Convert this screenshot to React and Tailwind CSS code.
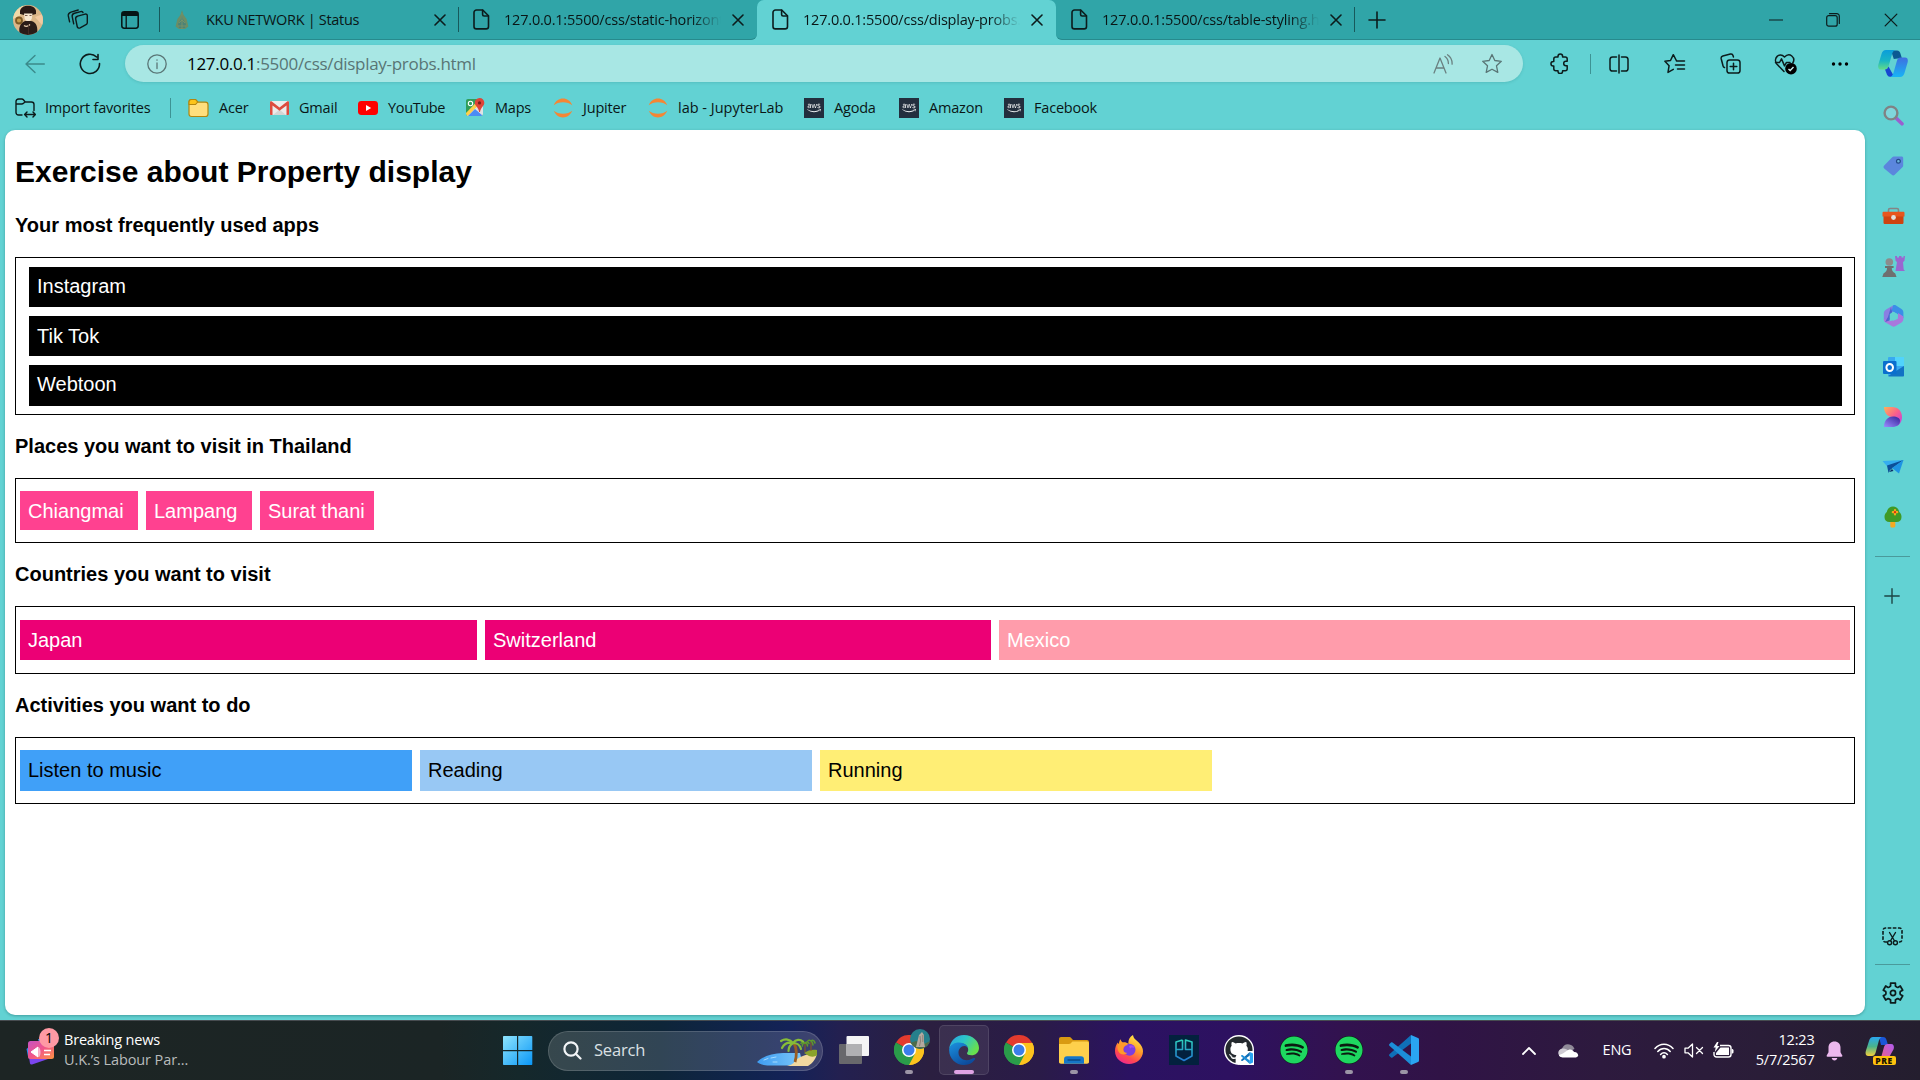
import React from "react";
import { FaSpotify, FaGithub, FaAws } from "react-icons/fa";

/* ---------- small helpers ---------- */

function Svg({ w = 20, h = w, box = `0 0 ${w} ${h}`, children, className = "" }) {
  return (
    <svg width={w} height={h} viewBox={box} fill="none" className={`block shrink-0 ${className}`}>
      {children}
    </svg>
  );
}

function Line({ w, h, box, children, color = "#0c1c1c", sw = 1.4, className }) {
  return (
    <Svg w={w} h={h} box={box} className={className}>
      <g stroke={color} strokeWidth={sw} strokeLinecap="round" strokeLinejoin="round">
        {children}
      </g>
    </Svg>
  );
}

/* ---------- browser chrome icons ---------- */

const Avatar = () => (
  <Svg w={30} box="0 0 30 30">
    <clipPath id="av"><circle cx="15" cy="15" r="15" /></clipPath>
    <g clipPath="url(#av)">
      <rect width="30" height="30" fill="#dcb688" />
      <path d="M0 0h10v9L0 14z" fill="#f0d9a8" />
      <path d="M22 12l8-3v12z" fill="#f3c9a0" />
      <path d="M7 6c1-7 15-7 16 0v3l-4 1H11L7 9z" fill="#2b1a15" />
      <path d="M11 8.500h8.500l-.8 5.500c-2 3-5 3-7 0z" fill="#f8e8d2" />
      <path d="M12 10.500h2.500M16.500 10.500h2" stroke="#6a4a3c" strokeWidth=".9" />
      <path d="M7 30c-2-7 0-12 5-14h6c6 1 7 7 6 14z" fill="#2a1c18" />
      <path d="M11 20.500c2 1.500 4 1 6-1" stroke="#e9cfb0" strokeWidth="1.200" />
      <circle cx="6" cy="15.500" r="3" stroke="#7d5a25" strokeWidth="1.800" fill="#c89b4c" />
      <path d="M15.500 19v11" stroke="#4a3128" strokeWidth=".8" />
    </g>
  </Svg>
);

const Workspaces = () => (
  <Line w={22} h={21} sw={1.4}>
    <path d="M10.600 7.200l7.500-2.100c1.300-.3 2.200.4 2.200 1.600v7.100c0 .9-.5 1.500-1.300 1.900l-5.900 3.100c-1.500.7-2.600.1-2.900-1.300l-1.500-7.300c-.3-1.500.4-2.600 1.900-3z" />
    <path d="M16 3.500c-.3-1-1.200-1.200-2.300-.9L7.500 4.300c-1.800.5-2.600 1.600-2.300 3.300l1.500 7.300" />
    <path d="M11.200 1L4 3.100C2 3.700 1 5 1.300 6.900l1.300 6" />
  </Line>
);

const TabActions = () => (
  <Svg w={18} h={18}>
    <rect x=".8" y=".8" width="16.400" height="16.400" rx="2.400" stroke="#061414" strokeWidth="1.500" />
    <path d="M1 2.500A1.800 1.800 0 012.800 1h12.400A1.800 1.800 0 0117 2.500V5H1z" fill="#061414" />
    <path d="M5.200 5v12" stroke="#061414" strokeWidth="1.300" />
  </Svg>
);

const KkuIcon = () => (
  <Svg w={14} h={20}>
    <path d="M7 0l1.600 5 3 4 1.800 7.500L10 19H4L.6 16.500 2.400 9l3-4z" fill="#6c8d65" />
    <path d="M7 4l1 5 3 5-1 4H4l-1-4 3-5z" fill="#4d8276" />
    <path d="M7 3v16M4 13l3-3 3 3M3 16h8" stroke="#7f9568" strokeWidth=".8" />
  </Svg>
);

const PageIcon = () => (
  <Line w={17} h={21} sw={1.6}>
    <path d="M3.500 1h6.200l5.800 5.800v10.700a2.400 2.400 0 01-2.400 2.400H3.400A2.400 2.400 0 011 17.500v-14A2.500 2.500 0 013.500 1z" />
    <path d="M9.600 1.200v4.300c0 1 .5 1.500 1.500 1.500h4.200" />
  </Line>
);

const CloseX = ({ s = 11, sw = 1.5 }) => (
  <Line w={s} box="0 0 12 12" sw={sw}><path d="M1 1l10 10M11 1L1 11" /></Line>
);

const Puzzle = () => (
  <Line w={20} h={21} sw={1.5}>
    <path d="M8 4V3.200a2.300 2.300 0 014.600 0V4h2.600c1.300 0 2 .7 2 2v2.300h-1.300a2.200 2.200 0 000 4.400h1.300v3c0 1.300-.7 2-2 2h-2.600v.6a2.300 2.300 0 01-4.600 0v-.6H5.800c-1.300 0-2-.7-2-2v-2.800H3.200a2.200 2.200 0 010-4.500h.6V6c0-1.300.7-2 2-2z" />
  </Line>
);

const STAR = "M11 1.500l2.800 6 6.500.8-4.800 4.500 1.300 6.600L11 16.200l-5.800 3.200 1.300-6.600L1.700 8.300l6.500-.8z";

const ReadAloud = () => (
  <Line w={21} h={20} color="#6a8080" sw={1.3}>
    <path d="M1 19L7 4l6 15M3.200 14h7.800" />
    <path d="M12 2.500c2.300 1.700 3.400 3.900 3.400 7M14.500.8c3.200 2.200 4.800 5.300 4.600 9.400" />
  </Line>
);

const SplitScreen = () => (
  <Line w={20} h={20} sw={1.5}>
    <path d="M7.500 3H3.600C2 3 1 4 1 5.600v8.800C1 16 2 17 3.600 17h3.900M12.500 3h3.900C18 3 19 4 19 5.600v8.800c0 1.600-1 2.600-2.600 2.600h-3.900M10 1v18" />
  </Line>
);

const FavStar = () => (
  <Line w={22} h={21} sw={1.5}>
    <path d="M12.600 8L9.300 1.700 6.500 7.500.9 8.300l4.200 4.400-1.100 6.700 5.300-3M11.500 12h9M12.500 8h8M13.500 16h7" />
  </Line>
);

const Collections = () => (
  <Line w={21} h={21} sw={1.5}>
    <rect x="7" y="7" width="13" height="13" rx="2.600" />
    <path d="M13.500 10.200v6.600M10.200 13.500h6.600M4.500 14.500c-.9-.3-1.300-.8-1.500-1.700L1.200 5.700c-.3-1.400.3-2.300 1.600-2.700l7.600-1.900c1.400-.3 2.300.2 2.700 1.600l.3 1.200" />
  </Line>
);

const HeartCheck = () => (
  <Svg w={24} h={22}>
    <g stroke="#0c1c1c" strokeWidth="1.500" strokeLinejoin="round" strokeLinecap="round">
      <path d="M10 18.500L2.800 11C-1.300 5.600 5.300-1.600 10.500 4c5.200-5.600 11.500.8 8.300 6" />
      <path d="M1.500 9.500h4l2-3.600 3 7 2-3.500h3.500" />
    </g>
    <circle cx="17" cy="15.700" r="5.800" fill="#000" />
    <path d="M14.500 15.900l1.700 1.700 3.300-3.500" stroke="#c9efee" strokeWidth="1.400" />
  </Svg>
);

const Copilot = ({ w = 30, h = 27 }) => (
  <Svg w={w} h={h} box="0 0 30 27">
    <defs>
      <linearGradient id="cp1" x1="0" y1="0" x2="0" y2="1"><stop offset="0" stopColor="#0b9ddb" /><stop offset=".55" stopColor="#19b5c4" /><stop offset="1" stopColor="#62dc88" /></linearGradient>
      <linearGradient id="cp2" x1="0" y1="0" x2="0" y2="1"><stop offset="0" stopColor="#3f6fe0" /><stop offset="1" stopColor="#18b4f5" /></linearGradient>
    </defs>
    <path d="M13 .5h6c2 0 3 1.500 3.600 3.500l1.200 4-8 1z" fill="#0b5a93" />
    <path d="M8 0h9c-2 1-2.800 3-3.500 6l-3 10.500c-.7 2-1.800 3-3.500 3H3C.5 19.500-.3 17.500.4 14.500L3.500 4C4.300 1.200 5.600 0 8 0z" fill="url(#cp1)" />
    <path d="M7 19.500c1.700 0 2.800-1 3.500-3l5 9C15 27 13.500 27 12 26.800c-2.200-.2-3-1.800-3.600-3.800z" fill="#1746d1" />
    <path d="M22 27h-9.500c2-1 2.700-3 3.500-6l3-10.500c.6-2 1.800-3 3.500-3H27c2.500 0 3.300 2 2.600 5L26.500 23c-.8 2.800-2.100 4-4.500 4z" fill="url(#cp2)" />
  </Svg>
);

/* ---------- bookmarks ---------- */

const ImportFav = () => (
  <Line w={21} h={20} sw={1.4}>
    <path d="M7 17H3.600C2 17 1 16 1 14.400V3.600C1 2 2 1 3.600 1h3.200c.7 0 1.200.2 1.600.7L10.200 4h6.200C18 4 19 5 19 6.600v6M1.200 6h5.500c.8 0 1.300-.2 1.800-.7L10 4M10 16.500h10M12 14l-2.400 2.500L12 19M18 14l2.400 2.500L18 19" />
  </Line>
);
const Folder = () => (
  <Svg w={21} h={20}>
    <path d="M1 4c0-1.600.9-2.500 2.500-2.500h4L10 4.200h7.500c1.500 0 2.500 1 2.500 2.500V16c0 1.600-1 2.500-2.500 2.500h-14C1.900 18.500 1 17.600 1 16z" fill="#ffdf7d" stroke="#b3860d" strokeWidth="1.200" />
    <path d="M1 6.500V4c0-1.600.9-2.500 2.500-2.500h4L9.700 4 7.500 6.500z" fill="#fcc419" stroke="#b3860d" strokeWidth="1.100" />
  </Svg>
);
const Gmail = () => (
  <Svg w={19} h={14}>
    <rect width="19" height="14" rx="1.500" fill="#ececec" />
    <path d="M3 14l6.500-5.500L16 14z" fill="#d5d5d5" />
    <path d="M0 1.500C0 .5 1 0 1.800.5L9.500 6.500 17.200.5c.8-.5 1.800 0 1.800 1V13c0 .6-.4 1-1 1h-1.500V4.500l-7 5.300-7-5.300V14H1c-.6 0-1-.4-1-1z" fill="#dd4b3e" />
  </Svg>
);
const YouTube = () => (
  <Svg w={20} h={14}><rect width="20" height="14" rx="3.400" fill="#f00" /><path d="M8 4l5.200 3L8 10z" fill="#fff" /></Svg>
);
const Maps = () => (
  <Svg w={19} h={19}>
    <clipPath id="mp"><rect y="1" width="17" height="17" rx="2" /></clipPath>
    <g clipPath="url(#mp)">
      <rect y="1" width="17" height="17" fill="#2f9e58" />
      <path d="M0 18L14 4h5v14z" fill="#dfe3e6" />
      <path d="M-1 16L12 2.500l2.500 2.500L2 18z" fill="#fdd04a" />
      <path d="M9 11l8 7H2z" fill="#4b8cf5" />
      <circle cx="4.500" cy="5.500" r="2.200" stroke="#fff" strokeWidth="1.100" />
    </g>
    <path d="M13.500 0A4.800 4.800 0 0118.300 5c0 3-3.400 4-4.300 9h-.8C12.500 9 8.800 8 8.800 5A4.800 4.800 0 0113.500 0z" fill="#df4437" />
    <circle cx="13.500" cy="4.900" r="1.600" fill="#7b1f19" />
  </Svg>
);
const Jupyter = () => (
  <Svg w={20} h={20}>
    <path d="M.8 7.200C2.600 2.900 6 .6 10 .6s7.400 2.300 9.200 6.600C16.800 5.300 13.700 4.200 10 4.200S3.200 5.300.8 7.200zM.8 12.800c1.800 4.300 5.200 6.600 9.200 6.600s7.400-2.300 9.200-6.600c-2.400 1.900-5.500 3-9.200 3s-6.800-1.100-9.200-3z" fill="#f58634" />
  </Svg>
);
const Aws = () => (
  <div className="grid size-5 shrink-0 place-items-center bg-[#232f3e]"><FaAws size={14} color="#f1f3f4" /></div>
);

const BOOKMARKS = [
  { icon: <Folder />, label: "Acer", w: "w-[82px]" },
  { icon: <Gmail />, label: "Gmail", w: "w-[88px]" },
  { icon: <YouTube />, label: "YouTube", w: "w-[108px] tracking-[-0.35px]" },
  { icon: <Maps />, label: "Maps", w: "w-[87px]" },
  { icon: <Jupyter />, label: "Jupiter", w: "w-[95px]" },
  { icon: <Jupyter />, label: "lab - JupyterLab", w: "w-[156px] tracking-[0px]" },
  { icon: <Aws />, label: "Agoda", w: "w-[95px]" },
  { icon: <Aws />, label: "Amazon", w: "w-[105px]" },
  { icon: <Aws />, label: "Facebook", w: "w-[105px]" },
];

/* ---------- sidebar ---------- */

const SIDEBAR = [
  <Svg w={21} h={21}>
    <path d="M13 13l6 5.800" stroke="#9a5fd0" strokeWidth="3.600" strokeLinecap="round" />
    <circle cx="8" cy="8" r="6.400" stroke="#808284" strokeWidth="2.400" fill="#7fd6dc" />
  </Svg>,
  <Svg w={21} h={20}>
    <path d="M9 1.500C9.600.9 10.300.5 11 .5h7.500c1 0 1.700.7 1.700 1.700v7.300c0 .7-.3 1.300-.8 1.800l-7.700 7.500c-.9.9-2 .9-2.900 0L1.200 12.400c-.9-.9-.9-2 0-2.900z" fill="#5b86dd" />
    <circle cx="15.400" cy="5.300" r="1.900" fill="#6bb4dc" stroke="#234a8a" strokeWidth="1.200" />
  </Svg>,
  <Svg w={23} h={18}>
    <path d="M6.500 5V3c0-1 .6-1.500 1.500-1.500h7c.9 0 1.500.5 1.500 1.500v2" stroke="#858585" strokeWidth="1.600" />
    <path d="M1.500 9h20v6.500c0 1-.6 1.600-1.600 1.600H3.100c-1 0-1.600-.6-1.600-1.600z" fill="#cf4310" />
    <path d="M.5 6c0-.8.500-1.300 1.300-1.300h19.400c.8 0 1.300.5 1.300 1.300v3.600H.5z" fill="#e8561d" />
    <circle cx="11.500" cy="10.500" r="2.400" fill="#e4e0dd" />
  </Svg>,
  <Svg w={23} h={23}>
    <path d="M13 1h2v1.500h2V1h2.500v1.500h2V1H23l-.6 5-1.400 1 .7 7.500 1.300 1.500H13.500l1.500-9-1.400-1z" fill="#9a67d0" />
    <circle cx="7.300" cy="7" r="3.800" fill="#8c8c8c" />
    <path d="M3 11h8.600v2H9.800c0 2.400.8 3.800 3.500 5.500l1.200 3.500H.3l1.200-3.500c2.700-1.700 3.500-3.100 3.500-5.500H3z" fill="#6f6f6f" />
  </Svg>,
  <Svg w={21} h={22}>
    <path d="M10 .5L3.500 4.200C1.500 5.400.8 6.700.8 8.700v5.500l4 3.500 2-9L13 5z" fill="#8a7fe2" />
    <path d="M10 .5c1-.6 2.200-.4 3 0l5.500 3.400c1.200.8 1.900 2 1.900 3.600v5.700L15 9.500 8 5.500 7 12z" fill="#3a8ee8" />
    <path d="M20.400 11.500v2c0 2-.8 3.400-2.200 4.200l-6 3.600c-1 .5-2 .5-3 0l-7-4c-1-.7-1.400-2-1.400-3.300l6.700 2.100L14.700 14l.5-6z" fill="#a878dd" />
    <path d="M8 2l1 5-2.500 8.500L2 17l3-5z" fill="#3f56cc" opacity=".75" />
    <path d="M10.500 6.800l3.900 2.300v4.300l-3.900 2.300-3.700-2.300V9.100z" fill="#62d2d3" />
  </Svg>,
  <Svg w={21} h={20}>
    <rect x="5" y="0" width="16" height="19" rx="1" fill="#38a9f0" />
    <path d="M12 0h9v9h-9z" fill="#51d3fb" />
    <path d="M5 19L21 9v9.500c0 .5-.4 1-1 1H6z" fill="#1272c4" />
    <rect x="0" y="4" width="13.500" height="13" rx="1" fill="#0a6fce" />
    <ellipse cx="6.700" cy="10.500" rx="3.300" ry="3.500" stroke="#fff" strokeWidth="2" />
  </Svg>,
  <Svg w={20} h={22}>
    <defs>
      <linearGradient id="ds1" x1="0" y1="0" x2="1" y2="1"><stop offset="0" stopColor="#ffb257" /><stop offset=".5" stopColor="#fb5f8b" /><stop offset="1" stopColor="#b43bf0" /></linearGradient>
      <linearGradient id="ds2" x1="0" y1="1" x2="1" y2="0"><stop offset="0" stopColor="#9a8cff" /><stop offset="1" stopColor="#35219a" /></linearGradient>
    </defs>
    <path d="M1 1h8c6 0 10 4 10 10 0 5-3 8-5 9l1-8-6-1C5 11 1 7 1 1z" fill="url(#ds1)" />
    <path d="M1 21c0-6 3.500-10.500 9-10.500 4 0 7 1.500 7 4.500 0 3.500-3 6-8 6z" fill="url(#ds2)" />
  </Svg>,
  <Svg w={22} h={16}>
    <path d="M.5 2L21.500 1 7 9.500z" fill="#35aef0" />
    <path d="M5 6.500L21.500 1 8 11l-1.500 3z" fill="#0c4f99" />
    <path d="M21.500 1L10 9l7 5.600z" fill="#1d93e4" />
    <path d="M7 13l3-3 1.500 2z" fill="#0a2c66" />
  </Svg>,
  <Svg w={18} h={22}>
    <path d="M6.300 14h5v6c0 .9-.6 1.500-1.500 1.500h-2c-.9 0-1.500-.6-1.500-1.500z" fill="#f4a921" />
    <path d="M9 .5c3.500 0 5.700 2.500 6.200 5.500 1.700 1.300 2.300 3 2.300 5 0 3.200-2 5-5 5H5.500c-3 0-5-1.800-5-5 0-2 .7-3.700 2.300-5C3.500 3 5.500.5 9 .5z" fill="#3f9a25" />
    <path d="M11 4v4.400M8.800 6.200h4.400" stroke="#f8a91b" strokeWidth="2.200" strokeLinecap="round" />
    <circle cx="11" cy="6.200" r="1.100" fill="#d62a10" />
  </Svg>,
];

const Snip = () => (
  <Svg w={21} h={19}>
    <path d="M5 15H3.600C2 15 1 14 1 12.400V3.600C1 2 2 1 3.600 1h13.800C19 1 20 2 20 3.600v8.800c0 1.600-1 2.600-2.600 2.600H16" stroke="#0c1c1c" strokeWidth="1.600" strokeDasharray="3.600 1.500" />
    <g stroke="#0c1c1c" strokeWidth="1.400" strokeLinecap="round">
      <path d="M7.500 5.500l4.800 8M13.500 5.500l-4.800 8" />
      <circle cx="7.600" cy="15.700" r="2" /><circle cx="13.400" cy="15.700" r="2" />
    </g>
  </Svg>
);

const GEAR = (() => {
  const p = (r, deg) => {
    const a = (deg * Math.PI) / 180;
    return `${(11 + r * Math.cos(a)).toFixed(2)} ${(11 + r * Math.sin(a)).toFixed(2)}`;
  };
  const pts = [];
  for (let k = 0; k < 6; k++) {
    const a = -90 + k * 60;
    pts.push(p(7.4, a - 19), p(10.1, a - 14), p(10.1, a + 14), p(7.4, a + 19), p(7, a + 30));
  }
  return `M${pts.join("L")}Z`;
})();
const Gear = () => (
  <Line w={22} h={22} sw={1.7}><path d={GEAR} /><circle cx="11" cy="11" r="2.600" /></Line>
);

/* ---------- taskbar icons ---------- */

const Chrome = () => (
  <Svg w={30} box="0 0 30 30">
    <path d="M15 15L2 7.500A15 15 0 0128 7.500z" fill="#e33b2e" />
    <path d="M15 15L28 7.500A15 15 0 0115 30z" fill="#fcc31e" />
    <path d="M15 15v15A15 15 0 012 7.500z" fill="#2a9c4a" />
    <path d="M15 8h13.300A15 15 0 0115 30l6.200-11.500z" fill="#fcc31e" />
    <path d="M2 7.500l6.800 11A7 7 0 0015 22l6-3.300L15 30A15 15 0 012 7.500z" fill="#2a9c4a" />
    <circle cx="15" cy="15" r="7" fill="#fff" />
    <circle cx="15" cy="15" r="5.500" fill="#3b7eea" />
  </Svg>
);

const Edge = () => (
  <Svg w={30} box="0 0 30 30">
    <defs>
      <linearGradient id="eg1" x1="0" y1="0" x2="1" y2=".5"><stop offset="0" stopColor="#2a9fe4" /><stop offset=".5" stopColor="#2cc5c9" /><stop offset="1" stopColor="#68e04e" /></linearGradient>
      <linearGradient id="eg2" x1="0" y1="0" x2=".6" y2="1"><stop offset="0" stopColor="#1b92e0" /><stop offset="1" stopColor="#0d4b9c" /></linearGradient>
    </defs>
    <path d="M.2 14C1 6 7 0 15 0c8.500 0 15 6 15 13 0 4.500-3.500 7.300-7.500 7.300-3 0-4.500-1-4.500-2 0-.8 1.200-1.300 1.200-3.600C19.200 11 15.500 8 10.500 8 5 8 1.500 11 .2 14z" fill="url(#eg1)" />
    <path d="M.2 14C1.500 10 5 7.500 10 7.500c5.500 0 9.200 3.200 9.200 7 0-2-1.700-3.500-4-3.500C12 11 9.500 14 9.500 17.500c0 6.500 7 9.500 13 6.500 1.800-.9 3-1.200 3.500-.5.700 1-3.500 6.500-11 6.500C6.500 30-.5 23 .2 14z" fill="url(#eg2)" />
  </Svg>
);

const Explorer = () => (
  <Svg w={30} h={27}>
    <path d="M0 2C0 .8.800 0 2 0h8c1 0 1.600.3 2.200 1L14 3h14c1.200 0 2 .8 2 2v6H0z" fill="#d99a12" />
    <path d="M0 7h9.500c1 0 1.500-.2 2.200-.8L13.500 4.500H28c1.300 0 2 .8 2 2V25c0 1-.8 1.700-2 1.700H2c-1.200 0-2-.7-2-1.700z" fill="#fed04c" />
    <path d="M5 26.700v-4.500c0-2 1-3 3-3h14c2 0 3 1 3 3v4.500z" fill="#1676c8" />
    <path d="M9 23h12" stroke="#0b4a86" strokeWidth="1.300" strokeLinecap="round" />
  </Svg>
);

const Firefox = () => (
  <Svg w={30} box="0 0 30 30">
    <defs>
      <linearGradient id="ff1" x1=".8" y1="0" x2=".3" y2="1"><stop offset="0" stopColor="#fff04a" /><stop offset=".45" stopColor="#ff9a2a" /><stop offset=".75" stopColor="#ff4a4f" /><stop offset="1" stopColor="#f0288f" /></linearGradient>
    </defs>
    <path d="M19 0c.5 4 3.500 5 5.500 7.200 3 3 4.500 5.800 4.500 9C29 23.500 22.500 29 15 29S1 23.500 1 16c0-3.500 1.200-6.500 2.800-8.500L4.500 10c.5-2.500 1-4.500 2-5.800.3 1.600 1.300 2.800 2.500 3.200 2.200-.2 4.200.3 5.500 1.600C14 5 16 1.500 19 0z" fill="url(#ff1)" />
    <circle cx="15.500" cy="14.800" r="6" fill="#7a3fe0" />
    <path d="M4 9c3-2 7-1.500 10 1-2 0-3.800 1-4.800 2.800-.7 3 1 5.200 4 5.200-3 2.500-7.200 1.500-8.700-1.500C3.300 14 3 11.500 4 9z" fill="#ff9a2a" />
    <path d="M15 11c2-1.500 5-.5 5.500 2-1.500-1-3.500-.8-4.500.6z" fill="#a54bf0" />
  </Svg>
);

const HexApp = () => (
  <Svg w={30} box="0 0 30 30">
    <defs><linearGradient id="hx" gradientUnits="userSpaceOnUse" x1="0" y1="4" x2="0" y2="26"><stop offset="0" stopColor="#2fd3bd" /><stop offset="1" stopColor="#2177d0" /></linearGradient></defs>
    <rect width="30" height="30" fill="#03213e" />
    <g stroke="url(#hx)" strokeWidth="1.600" strokeLinejoin="round">
      <path d="M13.500 5L7 7v14l8 4.500 8-4.500V7l-6.500-2v9.500H23" />
      <path d="M13.500 5v9.500H7" />
    </g>
  </Svg>
);

const VSCode = ({ s = 30 }) => (
  <Svg w={s} box="0 0 30 30">
    <path d="M22 0l7 3c.7.300 1 .8 1 1.500v21c0 .7-.3 1.200-1 1.500l-7 3z" fill="#2aa5f2" />
    <path d="M22 0v8.500L3.500 22.500c-.5.400-1 .4-1.500 0L.4 21c-.5-.5-.5-1.200 0-1.700z" fill="#0f6fb8" />
    <path d="M22 30v-8.500L3.500 7.500c-.5-.4-1-.4-1.500 0L.4 9c-.5.5-.5 1.200 0 1.700z" fill="#1c8ed8" />
  </Svg>
);

const TaskView = () => (
  <Svg w={30} h={28}>
    <rect x="0" y="8" width="23" height="20" rx="1" fill="#68686c" />
    <rect x="7.500" y="0" width="22.500" height="20" rx="1" fill="#f4f4f5" />
    <rect x="7.500" y="8" width="15.500" height="12" fill="#b0b0b3" />
  </Svg>
);

const Spotify = () => (
  <div className="grid size-[28px] place-items-center rounded-full bg-[#0b1a10]"><FaSpotify size={28} color="#1ed760" /></div>
);

const GitHub = () => (
  <div className="relative grid size-[30px] place-items-center rounded-full bg-white">
    <FaGithub size={28} color="#24292e" />
    <div className="absolute right-0 bottom-0 grid size-[14px] place-items-center bg-white"><VSCode s={12} /></div>
  </div>
);

const ChromeProfile = () => (
  <div className="relative">
    <Chrome />
    <div className="absolute -top-[6px] left-[16px] size-5 overflow-hidden rounded-full bg-[#26808c]">
      <Svg w={20} box="0 0 20 20">
        <path d="M0 14l6-2 8 3 6-3v8H0z" fill="#4c6b4c" />
        <path d="M6 18l2-8 1-4 3-3 2 3v7l1 5z" fill="#b5aaa0" />
        <path d="M10 7l.5 5-1 5M12.800 6v7" stroke="#8a8078" strokeWidth="1" />
      </Svg>
    </div>
  </div>
);

const APPS = [
  { icon: <TaskView /> },
  { icon: <ChromeProfile />, dot: true },
  { icon: <Edge />, active: true },
  { icon: <Chrome /> },
  { icon: <Explorer />, dot: true },
  { icon: <Firefox /> },
  { icon: <HexApp /> },
  { icon: <GitHub /> },
  { icon: <Spotify /> },
  { icon: <Spotify />, dot: true },
  { icon: <VSCode />, dot: true },
];

const WindowsLogo = () => (
  <Svg w={30} h={29}>
    <defs><linearGradient id="wn" x1="0" y1="0" x2="1" y2="1"><stop offset="0" stopColor="#8ee4fd" /><stop offset="1" stopColor="#0a97f7" /></linearGradient></defs>
    <path d="M0 .8C0 .3.300 0 .8 0H14v14H0zM15.200 0H28.500c.5 0 .8.300.8.800V14H15.200zM0 15.200h14V29H.8c-.5 0-.8-.3-.8-.8zM15.200 15.200h14.100v13c0 .5-.3.800-.8.800H15.200z" fill="url(#wn)" />
  </Svg>
);

const Island = () => (
  <Svg w={61} h={30}>
    <defs><linearGradient id="sea" x1="0" y1="0" x2="1" y2="0"><stop offset="0" stopColor="#3f9cf0" /><stop offset="1" stopColor="#7cc8fb" /></linearGradient></defs>
    <path d="M0 25c6-6 15-8.500 26-9h17l3 12.500H15C8 29 3 27.500 0 25z" fill="url(#sea)" />
    <path d="M7 23l4-1.500M14 21l5-1M16 25h4" stroke="#aee0ff" strokeWidth=".9" strokeLinecap="round" />
    <path d="M30 29c5-1 7-3 9-6 3-3 10-6 21-7-.5 5-4 10-9 13z" fill="#f2d9a0" />
    <path d="M47 16c4-3 9-4 13-3v5c-2 2-5 2-8 1z" fill="#8aa22b" />
    <path d="M48 15V6M54 14V5" stroke="#8c5a24" strokeWidth="1.100" />
    <g stroke="#5f9a2c" strokeWidth="1.500" strokeLinecap="round">
      <path d="M48 6c-2-1.500-3-1-4 .5M48 6c2-1.500 3.500-1 4 .5M48 6c-2 0-3 1.500-2.500 3M48 6c1.500 0 2.500 1 2.500 3M54 4c-2-1.500-3-.5-4 1M54 4c2-1.500 3.500 0 4 2M54 4c1.500 1 2 2 2 4" />
    </g>
    <path d="M38 25c2-7 2-13-1-19" stroke="#9a5d22" strokeWidth="2.800" />
    <g stroke="#86bd38" strokeWidth="2.200" strokeLinecap="round">
      <path d="M36 6c-3-4-8-4.500-12-2M36 6c-5-1-9 1-11 5M36 6c-3 2-4.500 4-4.500 8M36 6c3-4 7-4 10-1.500M36 6c4 0 7 2 8 6" />
    </g>
  </Svg>
);

const NewsIcon = () => (
  <div className="relative">
    <Svg w={28} h={28}>
      <defs><linearGradient id="nw" x1="0" y1="0" x2="1" y2="1"><stop offset="0" stopColor="#c752c4" /><stop offset=".5" stopColor="#f1568a" /><stop offset="1" stopColor="#ff9540" /></linearGradient></defs>
      <path d="M.5 12l2 10L5 8zM12 2h8l-6 6z" fill="#2f8af0" />
      <path d="M3 20l19 2-16 5.500c-1 .3-1.700 0-2-1z" fill="#7b45f0" />
      <rect x="2" y="4" width="26" height="18" rx="2.500" fill="url(#nw)" />
      <path d="M5 15l7-5v10z" fill="#fff" stroke="#fff" strokeLinejoin="round" />
      <path d="M13 10.500c2 1.500 2 8 0 9.500z" fill="#f7b7cf" />
      <path d="M18 13.500h7M18 17.500h6" stroke="#fff" strokeWidth="1.600" />
    </Svg>
    <div className="absolute -top-[9px] left-[13px] grid size-5 place-items-center rounded-full bg-[#ff99a4] text-[14px] leading-none text-black">1</div>
  </div>
);

/* ---------- page building blocks ---------- */

function Tab({ icon, title, faded = true }) {
  return (
    <div className="flex h-[39px] w-[299px] shrink-0 items-center pl-[15px]">
      <div className="flex w-[31px] shrink-0">{icon}</div>
      <div className={`w-[217px] shrink-0 whitespace-nowrap ${faded ? "tracking-[-0.2px] [mask-image:linear-gradient(to_right,#000_86%,transparent)]" : "tracking-[-0.3px]"}`}>{title}</div>
      <div className="ml-[11px] pt-[1px]"><CloseX s={12} sw={1.6} /></div>
    </div>
  );
}

const Divider = ({ className = "" }) => <div className={`w-px shrink-0 ${className}`} />;

const H3 = ({ children, className = "mt-[19px]" }) => (
  <h3 className={`text-[20px] leading-6 font-bold ${className}`}>{children}</h3>
);

export default function App() {
  return (
    <div className="flex h-[1080px] w-[1920px] flex-col overflow-hidden bg-[#62d2d3] font-['Open_Sans','Noto_Sans',sans-serif] text-[14.5px] tracking-[-0.2px] text-[#0a1616]">
      {/* tab strip */}
      <div className="flex h-10 shrink-0">
        <div className="flex h-10 w-[757px] items-center rounded-br-[6px] border-b border-[#278a8d] bg-[#30a5a8]">
          <div className="ml-[13px]"><Avatar /></div>
          <div className="ml-[24px]"><Workspaces /></div>
          <div className="ml-[32px]"><TabActions /></div>
          <Divider className="ml-[20px] h-[25px] bg-[#17595b]" />
          <Tab icon={<KkuIcon />} faded={false} title="KKU NETWORK | Status" />
          <Divider className="-mx-[1px] h-[25px] bg-[#17595b]" />
          <Tab icon={<PageIcon />} title="127.0.0.1:5500/css/static-horizont" />
        </div>
        <div className="h-10 w-[299px] bg-[linear-gradient(#30a5a8_50%,#62d2d3_50%)]">
          <div className="h-10 rounded-t-[7px] bg-[#62d2d3]">
            <Tab icon={<PageIcon />} title="127.0.0.1:5500/css/display-probs." />
          </div>
        </div>
        <div className="flex h-10 flex-1 items-center rounded-bl-[6px] border-b border-[#278a8d] bg-[#30a5a8]">
          <Tab icon={<PageIcon />} title="127.0.0.1:5500/css/table-styling.h" />
          <Divider className="-ml-[1px] h-[25px] bg-[#17595b]" />
          <div className="ml-[13px]"><Line w={18} sw={1.6}><path d="M9 1v16M1 9h16" /></Line></div>
          <div className="ml-auto flex items-center">
            <Line w={14} h={14} sw={1.2}><path d="M.5 7h13" /></Line>
            <div className="ml-[43px]">
              <Line w={14} h={14} sw={1.2}><rect x=".7" y="2.700" width="10.500" height="10.500" rx="2" /><path d="M3.500.7h7.300a2.500 2.500 0 012.500 2.500v7.300" /></Line>
            </div>
            <div className="mr-[22px] ml-[44px]"><CloseX s={14} sw={1.1} /></div>
          </div>
        </div>
      </div>

      {/* address bar */}
      <div className="flex h-[47px] shrink-0 items-center">
        <Line w={20} h={20} color="#3b8a8b" className="ml-[25px]"><path d="M19.300 10H1M10 1.500L1 10l9 8.500" /></Line>
        <Line w={22} h={22} sw={1.6} className="ml-[34px]"><path d="M20.500 10.500A9.600 9.600 0 1117.600 4M19 1.500v5h-5" /></Line>
        <div className="ml-[24px] flex h-[37px] w-[1398px] items-center rounded-full bg-[#a8e7e4] shadow-[0_1px_3px_rgba(0,80,80,0.15)]">
          <Line w={20} h={20} color="#5a7676" sw={1.3} className="ml-[22px]"><circle cx="10" cy="10" r="9.200" /><path d="M10 9v5.500M10 5.800v.4" /></Line>
          <div className="ml-[20px] flex-1 text-[17px] tracking-[-0.3px] text-[#587575]"><span className="text-black">127.0.0.1</span>:5500/css/display-probs.html</div>
          <ReadAloud />
          <Line w={22} h={21} color="#5a7676" sw={1.3} className="mr-[20px] ml-[27px]"><path d={STAR} /></Line>
        </div>
        <div className="ml-[14px] flex w-[45px] justify-center"><Puzzle /></div>
        <div className="flex w-4 justify-center"><Divider className="h-5 bg-[#3d9394]" /></div>
        <div className="flex w-[42px] justify-center"><SplitScreen /></div>
        <div className="flex w-[70px] justify-center"><FavStar /></div>
        <div className="flex w-10 justify-center"><Collections /></div>
        <div className="flex w-[72px] justify-center"><HeartCheck /></div>
        <div className="flex w-9 justify-center"><Svg w={18} h={4}><circle cx="2.500" cy="2" r="1.700" fill="#000" /><circle cx="9" cy="2" r="1.700" fill="#000" /><circle cx="15.500" cy="2" r="1.700" fill="#000" /></Svg></div>
        <div className="ml-2 flex w-[54px] justify-center"><Copilot /></div>
      </div>

      <div className="flex min-h-0 flex-1">
        {/* bookmarks + page */}
        <div className="flex w-[1865px] flex-col pb-[5px] pl-[5px]">
          <div className="flex h-[43px] shrink-0 items-center pb-[2px] pl-[10px]">
            <ImportFav />
            <span className="ml-[9px] w-[125px] whitespace-nowrap">Import favorites</span>
            <Divider className="mr-[17px] h-5 bg-[#3d9394]" />
            {BOOKMARKS.map((b) => (
              <div key={b.label} className={`flex shrink-0 items-center gap-[10px] whitespace-nowrap ${b.w}`}>
                {b.icon}
                <span>{b.label}</span>
              </div>
            ))}
          </div>
          <main className="flex-1 rounded-[10px] bg-white px-[10px] pt-[25px] font-['Liberation_Sans',Arial,sans-serif] tracking-normal text-black shadow-[0_1px_3px_rgba(0,60,60,0.35)]">
            <h1 className="text-[30px] leading-[34px] font-bold">Exercise about Property display</h1>

            <H3 className="mt-6">Your most frequently used apps</H3>
            <div className="mt-5 flex h-[158px] flex-col gap-[9px] border border-black pt-[9px] pr-3 pl-[13px] text-[20px] text-white">
              <div className="h-10 bg-black pl-2 leading-[38px]">Instagram</div>
              <div className="h-10 bg-black pl-2 leading-10">Tik Tok</div>
              <div className="h-[41px] bg-black pl-2 leading-[39px]">Webtoon</div>
            </div>

            <H3>Places you want to visit in Thailand</H3>
            <div className="mt-5 flex h-[65px] gap-2 border border-black px-1 pt-3 text-[20px] leading-[41px] text-white">
              <div className="h-[39px] w-[118px] bg-[#ff4190] pl-2">Chiangmai</div>
              <div className="h-[39px] w-[106px] bg-[#ff4190] pl-2">Lampang</div>
              <div className="h-[39px] w-[114px] bg-[#ff4190] pl-2">Surat thani</div>
            </div>

            <H3>Countries you want to visit</H3>
            <div className="mt-5 flex h-[68px] gap-2 border border-black px-1 pt-[13px] text-[20px] leading-10 text-white">
              <div className="h-10 w-[457px] bg-[#ec0075] pl-2">Japan</div>
              <div className="h-10 w-[506px] bg-[#ec0075] pl-2">Switzerland</div>
              <div className="h-10 flex-1 bg-[#ff9cab] pl-2">Mexico</div>
            </div>

            <H3>Activities you want to do</H3>
            <div className="mt-5 flex h-[67px] gap-2 border border-black px-1 pt-3 text-[20px] leading-[41px]">
              <div className="h-[41px] w-[392px] bg-[#40a0f8] pl-2">Listen to music</div>
              <div className="h-[41px] w-[392px] bg-[#98c8f4] pl-2">Reading</div>
              <div className="h-[41px] w-[392px] bg-[#ffee75] pl-2">Running</div>
            </div>
          </main>
        </div>

        {/* sidebar */}
        <div className="flex flex-1 flex-col items-center pt-[3px]">
          {SIDEBAR.map((icon, i) => (
            <div key={i} className="flex h-[50.2px] w-full shrink-0 items-center justify-center pt-px pl-px">{icon}</div>
          ))}
          <div className="mt-[14px] h-px w-[35px] bg-[#4a9a9b]" />
          <Line w={16} h={16} sw={1.4} color="#1d4545" className="mt-[31px] mr-[1px]"><path d="M8 .8v14.400M.8 8h14.400" /></Line>
          <div className="mt-auto"><Snip /></div>
          <div className="mt-[18px] h-px w-[35px] bg-[#4a9a9b]" />
          <div className="mt-[17px] mb-[16px]"><Gear /></div>
        </div>
      </div>

      {/* taskbar */}
      <div className="flex h-[60px] shrink-0 items-center border-t border-[#474c50] bg-[linear-gradient(to_right,#1d2524_0px,#1b2525_440px,#15282b_520px,#0e2538_660px,#10244c_740px,#142258_790px,#232050_840px,#2b1f40_930px,#2a1b48_1040px,#2b1262_1130px,#2d1160_1230px,#32124f_1340px,#301346_1440px,#2d1a3e_1600px,#2a1d38_1760px,#241e2e_1920px)] text-white">
        <div className="flex w-[503px] items-center pl-[26px]">
          <NewsIcon />
          <div className="ml-[10px] pb-[2px] leading-5">
            <div>Breaking news</div>
            <div className="tracking-[-0.1px] text-[#b9bcbc]">U.K.’s Labour Par...</div>
          </div>
        </div>
        <WindowsLogo />
        <div className="ml-[15px] flex h-10 w-[275px] items-center overflow-hidden rounded-full border border-white/15 bg-white/15">
          <Line w={19} h={19} color="#f2f4f6" sw={2.2} className="ml-[14px]"><circle cx="8" cy="8" r="6.600" /><path d="M13 13l4.500 4.500" /></Line>
          <span className="ml-[12px] flex-1 text-[16.500px] text-[#dbe0e4]">Search</span>
          <div className="mr-[4px] pt-[2px]"><Island /></div>
        </div>
        <div className="ml-[3.5px] flex">
          {APPS.map((a, i) => (
            <div key={i} className="flex w-[55px] justify-center">
              <div className={`relative -mt-px grid size-[50px] place-items-center ${a.active ? "rounded-[5px] border border-white/10 bg-white/8" : ""}`}>
                {a.icon}
                {a.active && <div className="absolute bottom-0 h-1 w-5 rounded-full bg-[#dfa3e4]" />}
                {a.dot && <div className="absolute bottom-[1px] h-1 w-2 rounded-full bg-[#9c95a6]" />}
              </div>
            </div>
          ))}
        </div>
        <div className="ml-[77px] flex w-10 justify-center"><Line w={16} h={10} color="#fff" sw={1.8}><path d="M2 8l6-6 6 6" /></Line></div>
        <div className="flex w-10 justify-center">
          <Svg w={21} h={14}>
            <path d="M5 10C1 10 0 6 4 5c1-4 5-6 9-4 2 1 3 2.500 3.500 4z" fill="#908a98" />
            <path d="M4 4.500C7 4 10 6 12 8l-8 5C-1 12-1 6 4 4.500z" fill="#cfcbd3" />
            <path d="M4.500 13.500C2 13 1 12 1 11c3-1 5-2 7.500-4C11 4.500 15 5 16 8c4-.3 6 4.800 2 5.500z" fill="#fff" />
          </Svg>
        </div>
        <div className="w-[57px] pb-px text-center">ENG</div>
        <div className="-ml-[2px] flex w-10 justify-center">
          <Line w={20} h={16} color="#fff" sw={1.5}><path d="M1 5.500C6-.3 14-.3 19 5.500M3.800 8.500c3.500-4 9-4 12.400 0M6.600 11.400c2-2.200 4.800-2.200 6.800 0" /><circle cx="10" cy="13.700" r="1.100" fill="#fff" /></Line>
        </div>
        <div className="flex w-5 justify-center">
          <Line w={20} h={15} color="#fff" sw={1.3}><path d="M1 5.200h3L8.500 1v13L4 9.800H1zM12.500 4.500l6 6M18.500 4.500l-6 6" /></Line>
        </div>
        <div className="flex w-10 justify-center pb-px">
          <Svg w={21} h={17}>
            <path d="M7 3.500h8.500c1.500 0 2.500 1 2.500 2.500v6.500c0 1.500-1 2.500-2.500 2.500h-12C2 15 1 14 1 12.500V10" stroke="#fff" strokeWidth="1.400" />
            <path d="M7.500 5.500H16V13H3v-2z" fill="#fff" />
            <path d="M18.700 7c1.300 0 1.800.6 1.800 1.300v1.900c0 .7-.5 1.300-1.800 1.300z" fill="#fff" />
            <path d="M4 0L.5 5.500h2.200L1.800 10 6.500 4H4.200L5.500 0z" fill="#fff" />
          </Svg>
        </div>
        <div className="w-[71px] pb-[2px] text-right leading-5">
          <div>12:23</div>
          <div>5/7/2567</div>
        </div>
        <div className="flex w-10 justify-center">
          <Svg w={17} h={20}>
            <path d="M8.500.5c3.700 0 6 2.600 6 6v4.700l1.800 3.300c.3.700 0 1.200-.8 1.200h-14c-.8 0-1.100-.5-.8-1.200l1.800-3.300V6.500c0-3.400 2.300-6 6-6z" fill="#ecb8ee" />
            <path d="M5.700 17h5.600c-.3 1.600-1.300 2.500-2.800 2.500S6 18.600 5.700 17z" fill="#ecb8ee" />
          </Svg>
        </div>
        <div className="relative flex w-[50px] justify-center">
          <Svg w={30} h={28}>
            <defs>
              <linearGradient id="pc1" x1="0" y1="0" x2="0" y2="1"><stop offset="0" stopColor="#2aa8f0" /><stop offset=".5" stopColor="#4ab38a" /><stop offset="1" stopColor="#f4d03c" /></linearGradient>
              <linearGradient id="pc2" x1="1" y1="0" x2="0" y2="1"><stop offset="0" stopColor="#b05cf0" /><stop offset="1" stopColor="#f6607a" /></linearGradient>
            </defs>
            <path d="M14 0h4c2 0 3 1.300 3.500 3l1.500 5h-7z" fill="#1a56d8" />
            <path d="M8 0h8.500c-2 1-2.500 3-3 5l-3 11c-.7 2-1.800 3-3.500 3H3.500C1 19 0 17 .8 14L4 4C4.800 1.200 6 0 8 0z" fill="url(#pc1)" />
            <path d="M22 24h-8.500c2-1 2-2 3-5l2.500-9c.6-2 1.800-3 3.500-3H26c2.500 0 3.500 2 2.700 5z" fill="url(#pc2)" />
          </Svg>
          <div className="absolute top-[19px] right-[9px] h-[9px] w-[23px] rounded-[2px] bg-[#ffc20e] text-center text-[8.5px] leading-[9px] font-extrabold tracking-[0.5px] text-[#1b1400]">PRE</div>
        </div>
      </div>
    </div>
  );
}
